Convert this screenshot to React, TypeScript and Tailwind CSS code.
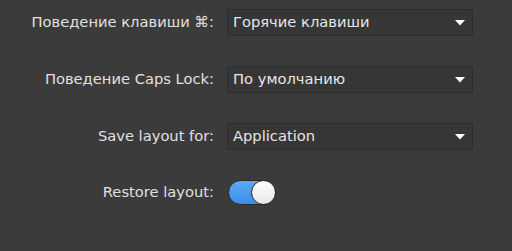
import React, { useState } from 'react';

const font = { fontFamily: '"DejaVu Sans", "Noto Sans", sans-serif' };

const Select = ({ value }: { value: string }) => (
  <div className="flex h-[27px] w-[246px] items-center justify-between rounded-[2px] border border-[#2c2c2c] bg-[#363636] pl-[5px] pr-[8px] text-[14.7px] text-[#e6e6e6]">
    <span>{value}</span>
    <svg width="10" height="6" viewBox="0 0 10 6" className="mr-[-1px]">
      <path d="M0 0 H10 L5 5.5 Z" fill="#ffffff" />
    </svg>
  </div>
);

const Row = ({ label, children }: { label: string; children: React.ReactNode }) => (
  <div className="flex items-center">
    <div className="w-[215px] pr-[1px] text-right text-[14.7px] text-[#e0e0e0]">{label}</div>
    <div className="ml-[12px]">{children}</div>
  </div>
);

export default function App() {
  const [restore, setRestore] = useState(true);

  return (
    <div className="h-[251px] w-[512px] bg-[#3b3b3b] pt-[9px]" style={font}>
      <div className="flex flex-col gap-[30px]">
        <Row label="Поведение клавиши ⌘:">
          <Select value="Горячие клавиши" />
        </Row>
        <Row label="Поведение Caps Lock:">
          <Select value="По умолчанию" />
        </Row>
        <Row label="Save layout for:">
          <Select value="Application" />
        </Row>
        <Row label="Restore layout:">
          <button
            onClick={() => setRestore(!restore)}
            className={`relative ml-[1px] flex h-[25px] w-[48px] items-center rounded-full border border-[#2a2a2a] ${
              restore ? 'bg-gradient-to-b from-[#5aaaf5] to-[#3a8ee6]' : 'bg-[#555555]'
            }`}
          >
            <span
              className={`absolute top-[-1px] h-[25px] w-[25px] rounded-full border border-[#2a2a2a] bg-gradient-to-b from-[#ffffff] to-[#e6e6e6] ${
                restore ? 'right-[-1px]' : 'left-[-1px]'
              }`}
            />
          </button>
        </Row>
      </div>
    </div>
  );
}
